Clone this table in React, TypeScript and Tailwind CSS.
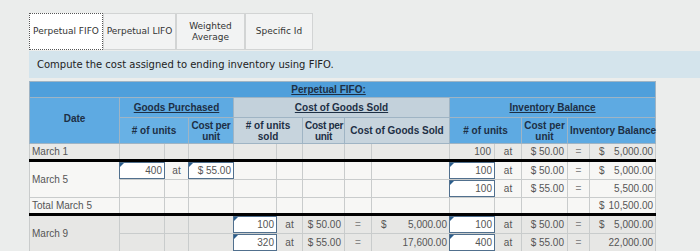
import React from 'react';

const grid = 'border border-[#c9cccc]';
const hdr = 'border border-[#9fb4c4] px-[2px] font-bold text-[10px] leading-[11px] text-[#1d2f45] text-center';
const thick = ' border-t-[3px] border-t-black';
const eq = ' text-center text-[#8a8a8a]';

function Input({ value }: { value: string }) {
  return (
    <div className="relative mx-[-1px] h-[17px] border border-[#51708e] bg-white px-[2px] text-right leading-[15px]">
      <span className="absolute left-0 top-0 h-0 w-0 border-r-[4px] border-t-[4px] border-r-transparent border-t-[#2a5d8c]" />
      {value}
    </div>
  );
}

function Money({ value, dollar }: { value: string; dollar?: boolean }) {
  return (
    <div className="flex justify-between pl-[9px] pr-[2px]">
      <span>{dollar ? '$' : ''}</span>
      <span>{value}</span>
    </div>
  );
}

function CostPer() {
  return (
    <>
      Cost per
      <br />
      unit
    </>
  );
}

export default function App() {
  const tabs = [
    { label: 'Perpetual FIFO', w: 'w-[74px]', active: true },
    { label: 'Perpetual LIFO', w: 'w-[73px]' },
    { label: 'Weighted\nAverage', w: 'w-[69px]' },
    { label: 'Specific Id', w: 'w-[68px]' },
  ];

  return (
    <div className="h-[251px] w-[700px] overflow-hidden bg-[#ebedec] pl-[29px] pt-[13px] font-['DejaVu_Sans',sans-serif]">
      <div className="flex h-[37px]">
        {tabs.map((t) => (
          <div
            key={t.label}
            className={
              'flex items-center justify-center whitespace-pre-line text-center text-[9px] leading-[11px] text-[#333] ' +
              t.w +
              (t.active
                ? ' border border-dotted border-[#555] bg-white'
                : ' border border-[#d2d4d4] bg-[#f2f3f3]')
            }
          >
            {t.label}
          </div>
        ))}
      </div>
      <div className="mt-[1px] flex h-[27px] items-center bg-[#d4e4ec] pl-[8px] text-[10px] text-[#222]">
        Compute the cost assigned to ending inventory using FIFO.
      </div>
      <table className="mt-[3px] w-[626px] table-fixed border-collapse bg-white font-['Liberation_Sans',Arial,sans-serif] text-[10px] text-[#555]">
        <colgroup>
          {[90, 45, 24, 45, 43, 26, 42, 27, 78, 45, 27, 46, 22, 66].map((w, i) => (
            <col key={i} style={{ width: w }} />
          ))}
        </colgroup>
        <thead>
          <tr className="h-[16px] bg-[#4f9fdb]">
            <th colSpan={14} className={hdr + ' pr-[30px]'}>
              <span className="underline">Perpetual FIFO:</span>
            </th>
          </tr>
          <tr className="h-[20px]">
            <th rowSpan={2} className={hdr + ' bg-[#5eaae2] pb-[4px]'}>
              Date
            </th>
            <th colSpan={3} className={hdr + ' bg-[#5eaae2]'}>
              <span className="underline">Goods Purchased</span>
            </th>
            <th colSpan={5} className={hdr + ' bg-[#c3d1db]'}>
              <span className="underline">Cost of Goods Sold</span>
            </th>
            <th colSpan={5} className={hdr + ' bg-[#5eaae2]'}>
              <span className="underline">Inventory Balance</span>
            </th>
          </tr>
          <tr className="h-[26px]">
            <th colSpan={2} className={hdr + ' bg-[#68b1e5]'}>
              # of units
            </th>
            <th className={hdr + ' whitespace-nowrap bg-[#68b1e5] px-0 tracking-[-0.2px]'}>
              <CostPer />
            </th>
            <th colSpan={2} className={hdr + ' bg-[#c7d4dd] px-[6px]'}>
              # of units sold
            </th>
            <th className={hdr + ' whitespace-nowrap bg-[#c7d4dd] px-0 tracking-[-0.3px]'}>
              <CostPer />
            </th>
            <th colSpan={2} className={hdr + ' bg-[#c7d4dd]'}>
              Cost of Goods Sold
            </th>
            <th colSpan={2} className={hdr + ' bg-[#5eaae2]'}>
              # of units
            </th>
            <th className={hdr + ' whitespace-nowrap bg-[#5eaae2] px-0'}>
              <CostPer />
            </th>
            <th colSpan={2} className={hdr + ' whitespace-nowrap bg-[#5eaae2] px-0'}>
              Inventory Balance
            </th>
          </tr>
        </thead>
        <tbody>
          <tr className="h-[17px] bg-[#e9e9e7]">
            <td className={grid + ' pl-[2px]'}>March 1</td>
            {Array.from({ length: 8 }).map((_, i) => (
              <td key={i} className={grid} />
            ))}
            <td className={grid + ' pr-[3px] text-right'}>100</td>
            <td className={grid + ' text-center'}>at</td>
            <td className={grid + ' pr-[3px] text-right'}>$ 50.00</td>
            <td className={grid + eq}>=</td>
            <td className={grid}>
              <Money dollar value="5,000.00" />
            </td>
          </tr>
          <tr className="h-[19px] bg-[#f7f7f5]">
            <td rowSpan={2} className={grid + thick + ' pl-[2px]'}>
              March 5
            </td>
            <td className={grid + thick}>
              <Input value="400" />
            </td>
            <td className={grid + thick + ' text-center'}>at</td>
            <td className={grid + thick}>
              <Input value="$ 55.00" />
            </td>
            {Array.from({ length: 5 }).map((_, i) => (
              <td key={i} className={grid + thick} />
            ))}
            <td className={grid + thick}>
              <Input value="100" />
            </td>
            <td className={grid + thick + ' text-center'}>at</td>
            <td className={grid + thick + ' pr-[3px] text-right'}>$ 50.00</td>
            <td className={grid + thick + eq}>=</td>
            <td className={grid + thick}>
              <Money dollar value="5,000.00" />
            </td>
          </tr>
          <tr className="h-[18px] bg-[#f7f7f5]">
            {Array.from({ length: 8 }).map((_, i) => (
              <td key={i} className={grid} />
            ))}
            <td className={grid}>
              <Input value="100" />
            </td>
            <td className={grid + ' text-center'}>at</td>
            <td className={grid + ' pr-[3px] text-right'}>$ 55.00</td>
            <td className={grid + eq}>=</td>
            <td className={grid}>
              <Money value="5,500.00" />
            </td>
          </tr>
          <tr className="h-[17px] bg-[#f7f7f5]">
            <td className={grid + ' pl-[2px]'}>Total March 5</td>
            {Array.from({ length: 12 }).map((_, i) => (
              <td key={i} className={grid} />
            ))}
            <td className={grid}>
              <Money dollar value="10,500.00" />
            </td>
          </tr>
          <tr className="h-[19px] bg-[#e7e7e5]">
            <td rowSpan={2} className={grid + thick + ' pl-[2px]'}>
              March 9
            </td>
            {Array.from({ length: 3 }).map((_, i) => (
              <td key={i} className={grid + thick} />
            ))}
            <td className={grid + thick}>
              <Input value="100" />
            </td>
            <td className={grid + thick + ' text-center'}>at</td>
            <td className={grid + thick + ' pr-[3px] text-right'}>$ 50.00</td>
            <td className={grid + thick + eq}>=</td>
            <td className={grid + thick}>
              <Money dollar value="5,000.00" />
            </td>
            <td className={grid + thick}>
              <Input value="100" />
            </td>
            <td className={grid + thick + ' text-center'}>at</td>
            <td className={grid + thick + ' pr-[3px] text-right'}>$ 50.00</td>
            <td className={grid + thick + eq}>=</td>
            <td className={grid + thick}>
              <Money dollar value="5,000.00" />
            </td>
          </tr>
          <tr className="h-[18px] bg-[#e7e7e5]">
            {Array.from({ length: 3 }).map((_, i) => (
              <td key={i} className={grid} />
            ))}
            <td className={grid}>
              <Input value="320" />
            </td>
            <td className={grid + ' text-center'}>at</td>
            <td className={grid + ' pr-[3px] text-right'}>$ 55.00</td>
            <td className={grid + eq}>=</td>
            <td className={grid}>
              <Money value="17,600.00" />
            </td>
            <td className={grid}>
              <Input value="400" />
            </td>
            <td className={grid + ' text-center'}>at</td>
            <td className={grid + ' pr-[3px] text-right'}>$ 55.00</td>
            <td className={grid + eq}>=</td>
            <td className={grid}>
              <Money value="22,000.00" />
            </td>
          </tr>
        </tbody>
      </table>
    </div>
  );
}
